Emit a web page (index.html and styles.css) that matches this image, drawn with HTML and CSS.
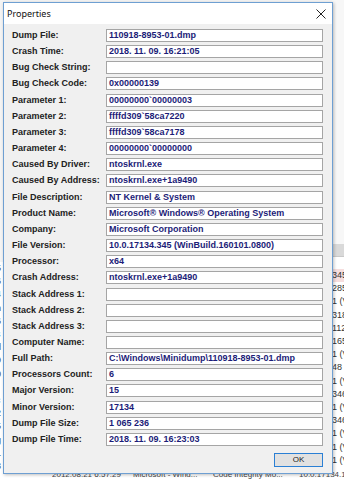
FILE: index.html
```html
<!DOCTYPE html>
<html>
<head>
<meta charset="utf-8">
<link rel="stylesheet" href="styles.css">
</head>
<body>
<div class="desk">
  <div class="left-strip">
    <div class="ls-top"></div>
    <div class="ls-list">
      <span>5</span><span>6</span><span>4</span><span>n</span><span>6</span><span>s</span><span>d</span><span>9</span><span>0</span><span>t</span><span>c</span><span>2</span><span>5</span><span>g</span><span>1</span><span>3</span>
    </div>
  </div>
  <div class="mid-area"></div>
  <div class="right-strip">
    <div class="rs-top"></div>
    <div class="rs-head"></div>
    <div class="rs-list">
      <span class="hl">345</span><span>285</span><span>1 (V</span><span>318</span><span>112</span><span>165</span><span>1 (V</span><span>48 (</span><span>1 (V</span><span>346</span><span>1 (V</span><span>346</span><span>1 (V</span><span>1 (V</span><span>1 (V</span>
    </div>
  </div>
  <div class="bottom-row">
    <span class="c1">2012.08.21 6:57:29</span><span class="c2">Microsoft - Wind...</span><span class="c3">Code Integrity Mo...</span><span class="c4">10.0.17134.1 (V</span>
  </div>
</div>

<div class="dialog">
  <div class="titlebar">
    <span class="title">Properties</span>
    <svg class="close" width="10" height="10" viewBox="0 0 10 10"><path d="M0.5 0.5 L9.5 9.5 M9.5 0.5 L0.5 9.5" stroke="#222" stroke-width="1" fill="none"/></svg>
  </div>
  <div class="content">
    <div class="grid">
      <div class="lbl">Dump File:</div><div class="val">110918-8953-01.dmp</div>
      <div class="lbl">Crash Time:</div><div class="val">2018. 11. 09. 16:21:05</div>
      <div class="lbl">Bug Check String:</div><div class="val"></div>
      <div class="lbl">Bug Check Code:</div><div class="val">0x00000139</div>
      <div class="lbl">Parameter 1:</div><div class="val">00000000`00000003</div>
      <div class="lbl">Parameter 2:</div><div class="val">ffffd309`58ca7220</div>
      <div class="lbl">Parameter 3:</div><div class="val">ffffd309`58ca7178</div>
      <div class="lbl">Parameter 4:</div><div class="val">00000000`00000000</div>
      <div class="lbl">Caused By Driver:</div><div class="val">ntoskrnl.exe</div>
      <div class="lbl">Caused By Address:</div><div class="val">ntoskrnl.exe+1a9490</div>
      <div class="lbl">File Description:</div><div class="val">NT Kernel &amp; System</div>
      <div class="lbl">Product Name:</div><div class="val">Microsoft® Windows® Operating System</div>
      <div class="lbl">Company:</div><div class="val">Microsoft Corporation</div>
      <div class="lbl">File Version:</div><div class="val">10.0.17134.345 (WinBuild.160101.0800)</div>
      <div class="lbl">Processor:</div><div class="val">x64</div>
      <div class="lbl">Crash Address:</div><div class="val">ntoskrnl.exe+1a9490</div>
      <div class="lbl">Stack Address 1:</div><div class="val"></div>
      <div class="lbl">Stack Address 2:</div><div class="val"></div>
      <div class="lbl">Stack Address 3:</div><div class="val"></div>
      <div class="lbl">Computer Name:</div><div class="val"></div>
      <div class="lbl">Full Path:</div><div class="val">C:\Windows\Minidump\110918-8953-01.dmp</div>
      <div class="lbl">Processors Count:</div><div class="val">6</div>
      <div class="lbl">Major Version:</div><div class="val">15</div>
      <div class="lbl">Minor Version:</div><div class="val">17134</div>
      <div class="lbl">Dump File Size:</div><div class="val">1 065 236</div>
      <div class="lbl">Dump File Time:</div><div class="val">2018. 11. 09. 16:23:03</div>
    </div>
    <div class="buttons">
      <button class="ok">OK</button>
    </div>
  </div>
</div>
</body>
</html>
```

FILE: styles.css
```css
html, body {
  margin: 0;
  padding: 0;
  width: 344px;
  height: 480px;
  overflow: hidden;
  font-family: "Liberation Sans", Arial, sans-serif;
}

.desk {
  position: relative;
  width: 344px;
  height: 480px;
  display: flex;
  background: #ffffff;
}

.left-strip {
  width: 4px;
  display: flex;
  flex-direction: column;
  overflow: hidden;
  background: #fff;
}
.ls-top {
  height: 262px;
  background: #f4f4f4;
}
.ls-list {
  display: flex;
  flex-direction: column;
  font-size: 9px;
  line-height: 13.2px;
  color: #444;
  margin-left: -4px;
}

.mid-area {
  flex: 1;
  background: #f3f3f3;
}

.right-strip {
  width: 12px;
  display: flex;
  flex-direction: column;
  overflow: hidden;
  background: #fff;
}
.rs-top {
  height: 244px;
  background: #f7f7f7;
}
.rs-head {
  height: 12px;
  background: #d9d9d9;
  border-bottom: 1px solid #c8c8c8;
}
.rs-list {
  display: flex;
  flex-direction: column;
  padding-top: 12px;
  font-size: 9px;
  line-height: 13.2px;
  color: #333;
  white-space: nowrap;
}
.rs-list .hl {
  background: #f6dede;
}

.bottom-row {
  position: absolute;
  left: 0;
  top: 469px;
  width: 344px;
  height: 11px;
  display: flex;
  font-size: 8px;
  line-height: 11px;
  color: #444;
  white-space: nowrap;
  overflow: hidden;
  background: #ffffff;
}
.bottom-row span {
  overflow: hidden;
  flex: none;
}
.bottom-row .c1 { margin-left: 52px; width: 76px; }
.bottom-row .c2 { margin-left: 5px; width: 72px; }
.bottom-row .c3 { margin-left: 8px; width: 80px; }
.bottom-row .c4 { margin-left: 6px; flex: 1; }

.dialog {
  position: absolute;
  left: 3px;
  top: 2px;
  width: 328px;
  height: 470px;
  border: 1px solid #6e9fd2;
  background: #f0f0f0;
  box-shadow: 1px 1px 3px rgba(0, 0, 0, 0.25);
  display: flex;
  flex-direction: column;
}

.titlebar {
  height: 21px;
  background: #ffffff;
  display: flex;
  align-items: center;
  justify-content: space-between;
  padding: 0 6px 0 3px;
}
.title {
  font-family: "Noto Sans", "Liberation Sans", sans-serif;
  font-size: 9px;
  color: #111;
}
.close {
  display: block;
}

.content {
  flex: 1;
  padding: 5px 9px 0 8px;
  display: flex;
  flex-direction: column;
}

.grid {
  display: grid;
  grid-template-columns: 94px 217px;
  grid-auto-rows: 13px;
  row-gap: 3.16px;
}

.lbl {
  font-size: 9px;
  font-weight: bold;
  color: #222;
  line-height: 13px;
  white-space: nowrap;
}

.val {
  box-sizing: border-box;
  height: 13px;
  background: #ffffff;
  border: 1px solid #a5a5a5;
  padding-left: 2px;
  font-size: 9px;
  font-weight: bold;
  color: #1c1c78;
  line-height: 11px;
  white-space: nowrap;
  overflow: hidden;
}

.buttons {
  display: flex;
  justify-content: flex-end;
  margin-top: 7px;
}
.ok {
  box-sizing: border-box;
  width: 49px;
  height: 14px;
  margin: 0;
  padding: 0;
  border: 1px solid #2a7fd4;
  background: #e1e1e1;
  font-family: "Liberation Sans", Arial, sans-serif;
  font-size: 8px;
  color: #222;
  line-height: 12px;
}
```
